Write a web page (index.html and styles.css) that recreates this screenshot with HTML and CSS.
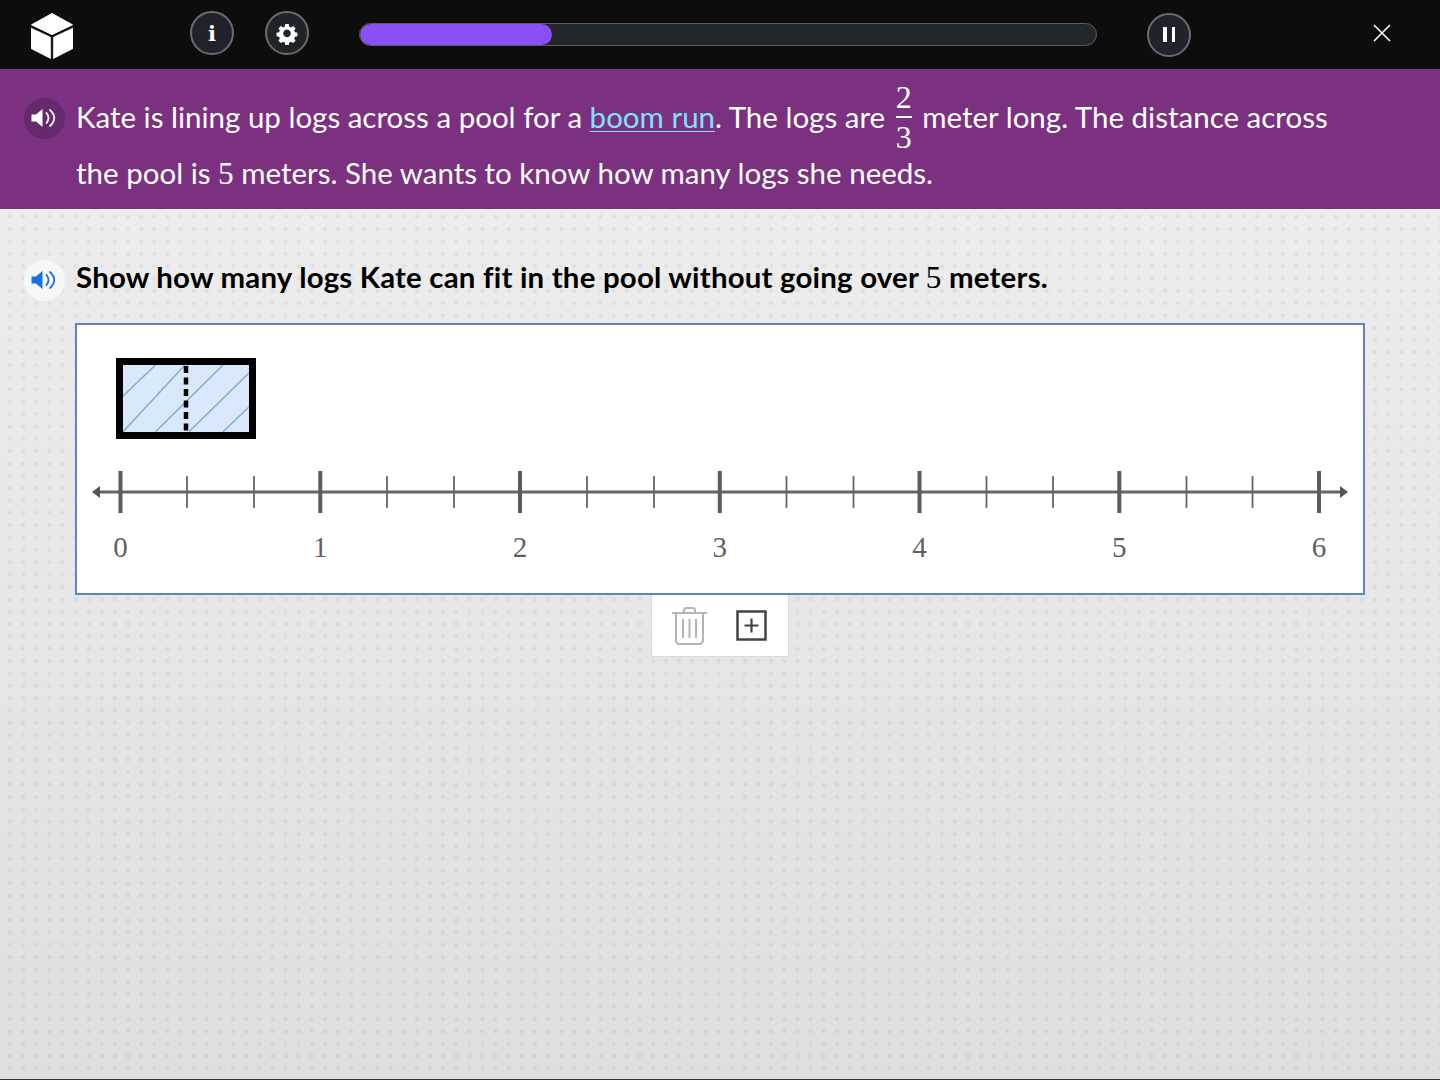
FILE: index.html
```html
<!DOCTYPE html>
<html lang="en">
<head>
<meta charset="utf-8">
<title>Logs across a pool</title>
<link rel="stylesheet" href="styles.css">
</head>
<body>
<div class="page">
  <header class="topbar">
    <svg class="logo" viewBox="0 0 42 46" aria-hidden="true">
      <path d="M21 0.5 L41.5 11.8 L21 21.6 L0.5 11.8 Z" fill="#fff" stroke="#fff" stroke-linejoin="round"/>
      <path d="M0 15 L19.6 24.2 V45.6 L0 35.6 Z" fill="#fff" stroke="#fff" stroke-width=".6" stroke-linejoin="round"/>
      <path d="M42 15 L22.4 24.2 V45.6 L42 35.6 Z" fill="#fff" stroke="#fff" stroke-width=".6" stroke-linejoin="round"/>
    </svg>
    <button class="round-btn info-btn">i</button>
    <button class="round-btn gear-btn">
      <svg viewBox="0 0 24 24" width="24" height="24" aria-hidden="true">
        <path fill="#fff" fill-rule="evenodd" d="M10 1.5h4l.6 3a8 8 0 0 1 2 .9l2.6-1.7 2.9 2.9-1.7 2.6a8 8 0 0 1 .9 2l3 .6v4l-3 .6a8 8 0 0 1-.9 2l1.7 2.6-2.9 2.9-2.6-1.7a8 8 0 0 1-2 .9l-.6 3h-4l-.6-3a8 8 0 0 1-2-.9l-2.6 1.7-2.9-2.9 1.7-2.6a8 8 0 0 1-.9-2l-3-.6v-4l3-.6a8 8 0 0 1 .9-2L1.9 6.6l2.9-2.9 2.6 1.7a8 8 0 0 1 2-.9zM12 8a4.500 4.500 0 1 0 .01 0z" transform="translate(1.8 1.8) scale(.85)"/>
      </svg>
    </button>
    <div class="progress"><div class="progress-fill"></div></div>
    <button class="round-btn pause-btn"><span class="pause-bar"></span><span class="pause-bar"></span></button>
    <svg class="close" viewBox="0 0 18 18" aria-hidden="true"><path d="M1 1 L17 17 M17 1 L1 17" stroke="#fff" stroke-width="1.6" fill="none"/></svg>
  </header>

  <section class="story">
    <span class="speaker speaker-dark">
      <svg viewBox="0 0 26 20" width="26" height="20" aria-hidden="true">
        <path d="M0.500 6.500 H5 L11.500 1 V19 L5 13.500 H0.500 Z" fill="#fff"/>
        <path d="M15.500 5 Q19.500 10 15.500 15 M19 2 Q27.500 10 19 18" fill="none" stroke="#fff" stroke-width="1.800" stroke-linecap="round"/>
      </svg>
    </span>
    <div class="story-text">
      <p class="story-line first">Kate is lining up logs across a pool for a <a class="term" href="#">boom run</a>. The logs are <span class="frac"><span>2</span><span class="frac-bar"></span><span>3</span></span> meter long. The distance across</p>
      <p class="story-line">the pool is <span class="num">5</span> meters. She wants to know how many logs she needs.</p>
    </div>
  </section>

  <main class="work">
    <div class="prompt">
      <span class="speaker speaker-light">
        <svg viewBox="0 0 26 20" width="26" height="20" aria-hidden="true">
          <path d="M0.500 6.500 H5 L11.500 1 V19 L5 13.500 H0.500 Z" fill="#1a70de"/>
          <path d="M15.500 5 Q19.500 10 15.500 15 M19 2 Q27.500 10 19 18" fill="none" stroke="#1a70de" stroke-width="1.800" stroke-linecap="round"/>
        </svg>
      </span>
      <h1 class="prompt-text">Show how many logs Kate can fit in the pool without going over <span class="num">5</span> meters.</h1>
    </div>

    <div class="canvas">
      <svg class="tile" viewBox="0 0 141 81" width="141" height="81" aria-hidden="true">
        <rect x="3.500" y="3.500" width="133" height="74" fill="#d9e8fb"/>
        <path d="M7 38 L39.500 7 M7 73.700 L69 7 M39.500 73.700 L107 7 M73 73.700 L134 14 M107 73.700 L134 48" stroke="#7fabdc" stroke-width="1.500" fill="none"/>
        <rect x="3.500" y="3.500" width="133" height="74" fill="none" stroke="#000" stroke-width="7"/>
        <path d="M70 8 V73" stroke="#000" stroke-width="4.500" stroke-dasharray="7 4.500" fill="none"/>
      </svg>
      <svg class="line" viewBox="0 0 1286 130" width="1286" height="130">
        <g class="axis">
          <path d="M20 53 H1266" class="axis-line"/>
          <path d="M15 53 L23 47 V59 Z M1271 53 L1263 47 V59 Z" class="axis-head"/>
        </g>
        <path class="tick-major" d="M43.500 32V74M243.300 32V74M443 32V74M642.800 32V74M842.500 32V74M1042.300 32V74M1242 32V74"/>
        <path class="tick-minor" d="M110 37V69M177 37V69M310 37V69M377 37V69M510 37V69M577 37V69M709.500 37V69M776.500 37V69M909.500 37V69M976 37V69M1109.500 37V69M1175.500 37V69"/>
        <g class="labels">
          <text x="43.500" y="118" class="label">0</text>
          <text x="243.300" y="118" class="label">1</text>
          <text x="443" y="118" class="label">2</text>
          <text x="642.800" y="118" class="label">3</text>
          <text x="842.500" y="118" class="label">4</text>
          <text x="1042.300" y="118" class="label">5</text>
          <text x="1242" y="118" class="label">6</text>
        </g>
      </svg>
    </div>

    <div class="tools">
      <svg viewBox="0 0 36 38" width="36" height="38" aria-hidden="true">
        <g fill="none" stroke="#b4b4b4" stroke-width="2">
          <path d="M0 6 H35"/>
          <path d="M12 6 V3.500 Q12 1 14.500 1 H20.500 Q23 1 23 3.500 V6"/>
          <path d="M4 6 V33 Q4 37 8 37 H27 Q31 37 31 33 V6"/>
          <path d="M11 12 V31 M17.500 12 V31 M24 12 V31"/>
        </g>
      </svg>
      <svg viewBox="0 0 32 32" width="32" height="32" aria-hidden="true">
        <rect x="1.500" y="1.500" width="28" height="28" fill="none" stroke="#444" stroke-width="2.500"/>
        <path d="M15.500 8.500 V22.500 M8.500 15.500 H22.500" stroke="#444" stroke-width="2.200" fill="none"/>
      </svg>
    </div>
  </main>
</div>
</body>
</html>
```
FILE: styles.css
```css
* { box-sizing: border-box; }

html, body {
  margin: 0;
  padding: 0;
  height: 100%;
}

body {
  font-family: "Lato", "Open Sans", sans-serif;
  overflow: hidden;
}

.page {
  display: flex;
  flex-direction: column;
  height: 1080px;
}

/* top bar */
.topbar {
  display: flex;
  align-items: center;
  height: 69px;
  flex: none;
  padding-left: 31px;
  background: #0d0d0e;
}

.logo {
  width: 42px;
  height: 46px;
  margin-top: 2px;
  margin-right: 117px;
  flex: none;
}

.round-btn {
  display: flex;
  align-items: center;
  justify-content: center;
  width: 44px;
  height: 44px;
  flex: none;
  padding: 0;
  border: 2px solid #6b6c6e;
  border-radius: 50%;
  background: #20242a;
  color: #fff;
}

.info-btn {
  margin-top: -3px;
  margin-right: 31px;
  font-family: "DejaVu Serif", serif;
  font-size: 21px;
  font-weight: 700;
}

.gear-btn { margin-top: -3px; }

.progress {
  width: 738px;
  height: 23px;
  margin: -1px 50px 0;
  flex: none;
  border: 1px solid #5a5d60;
  border-radius: 12px;
  background: #22272b;
  overflow: hidden;
}

.progress-fill {
  width: 192px;
  height: 100%;
  border-radius: 12px;
  background: #8a50f5;
}

.pause-btn {
  gap: 5px;
}

.pause-bar {
  width: 3.500px;
  height: 15px;
  background: #fff;
}

.close {
  width: 18px;
  height: 18px;
  margin-left: 182px;
  margin-top: -3px;
  flex: none;
}

/* story banner */
.story {
  display: flex;
  flex: none;
  height: 140px;
  padding: 14px 0 0 23.500px;
  background: #7b3180;
  color: #fff;
}

.speaker {
  display: flex;
  align-items: center;
  justify-content: center;
  width: 41px;
  height: 41px;
  flex: none;
  border-radius: 50%;
}

.speaker-dark {
  margin-top: 14.500px;
  background: #652a6e;
}

.speaker-light {
  margin-top: 4px;
  background: #f6f7f8;
}

.story-text {
  margin-left: 11.500px;
  font-size: 29.500px;
}

.story-line {
  margin: 0;
  height: 44px;
  line-height: 44px;
  white-space: nowrap;
}

.story-line.first {
  height: 68px;
  line-height: 68px;
}

.term {
  color: #7ee2ff;
  text-decoration: underline;
  text-decoration-thickness: 1px;
  text-underline-offset: 3px;
}

.num {
  font-family: "Liberation Serif", serif;
  font-size: 1.060em;
}

.frac {
  display: inline-flex;
  flex-direction: column;
  align-items: center;
  width: 18px;
  margin: -14px 2px -6px;
  vertical-align: middle;
  font-family: "Liberation Serif", serif;
  font-size: 32px;
  line-height: 38px;
}

.frac-bar {
  width: 16px;
  height: 2px;
  background: #fff;
}

/* work area */
.work {
  flex: 1;
  padding-top: 49px;
  border-bottom: 1px solid #333;
  background:
    radial-gradient(circle at center, rgba(0, 0, 0, .055) 0, rgba(0, 0, 0, .05) 1.5px, transparent 2.6px) 3.4px 1.5px / 13.13px 12.35px,
    linear-gradient(#ededed, #dfdfdf);
}

.prompt {
  display: flex;
  align-items: center;
  gap: 11.500px;
  height: 40px;
  padding-left: 23.500px;
}

.prompt-text {
  margin: -2px 0 0;
  font-size: 29.400px;
  font-weight: 700;
  letter-spacing: .21px;
  color: #000;
  white-space: nowrap;
}

.prompt-text .num {
  font-weight: 400;
}

.canvas {
  width: 1290px;
  height: 272px;
  margin: 25px 0 0 75px;
  padding-top: 33px;
  border: 2px solid #5f86b4;
  background: #fff;
}

.tile {
  display: block;
  margin-left: 39px;
}

.line {
  display: block;
}

.axis-line {
  stroke: #666;
  stroke-width: 3;
  fill: none;
}

.axis-head {
  fill: #555;
}

.tick-major {
  stroke: #5c5c5c;
  stroke-width: 4;
  fill: none;
}

.tick-minor {
  stroke: #666;
  stroke-width: 1.800;
  fill: none;
}

.label {
  font-family: "Liberation Serif", serif;
  font-size: 29px;
  fill: #5f5f5f;
  text-anchor: middle;
}

.tools {
  display: flex;
  align-items: center;
  justify-content: center;
  gap: 28px;
  width: 138px;
  height: 62px;
  margin: 0 auto;
  border: 1px solid #dcdcdc;
  border-top: none;
  background: #fff;
}
```
